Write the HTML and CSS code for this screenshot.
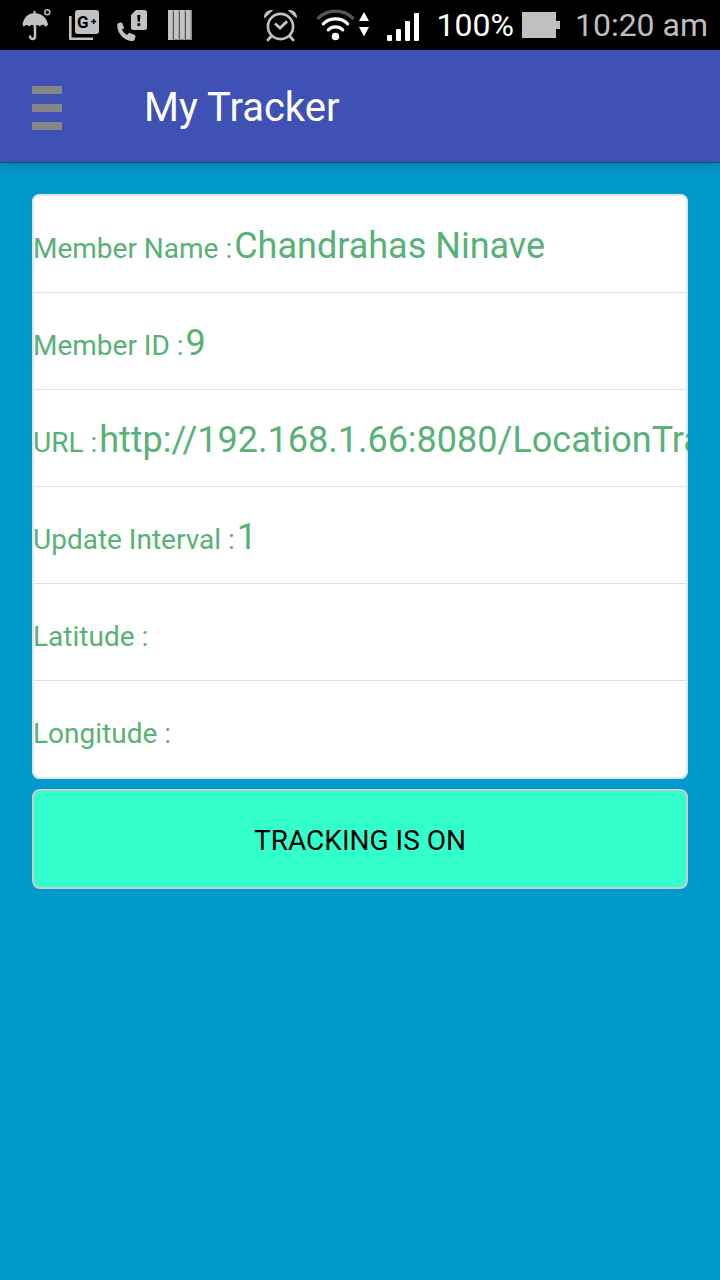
FILE: index.html
```html
<!DOCTYPE html>
<html lang="en">
<head>
<meta charset="utf-8">
<meta name="viewport" content="width=device-width, initial-scale=1">
<title>My Tracker</title>
<link rel="stylesheet" href="styles.css">
</head>
<body>
<div class="status-bar">
  <div class="status-group">
    <svg class="icon" width="48" height="50" viewBox="12 0 48 50" aria-hidden="true">
      <path fill="#c2c2c2" d="M33.5 11h2v2.200C42 13.600 47 18 48 24.500c-.4 1-1.200 1.800-2.300 2.300-1.400-2.500-4.200-2.700-5.700-.3-1-1.500-2.800-2-4.200-1.300h-2.600c-1.400-.7-3.200-.2-4.200 1.300-1.500-2.400-4-2-5 .3-.8-.5-1.300-1.500-1.400-2.500 1-6.400 5-10.700 10.900-11.100z"/>
      <path fill="none" stroke="#c2c2c2" stroke-width="2.500" stroke-linecap="round" d="M35 24v12.500c0 3.200-4.700 3.200-4.900 0"/>
      <circle cx="47.300" cy="12.300" r="2.500" fill="none" stroke="#b4b4b4" stroke-width="1.600"/>
    </svg>
    <svg class="icon" width="48" height="50" viewBox="60 0 48 50" aria-hidden="true">
      <path fill="none" stroke="#c2c2c2" stroke-width="2.600" stroke-linejoin="round" d="M70.300 16v22.700H93"/>
      <rect x="75" y="10" width="24" height="24" rx="3" fill="#c2c2c2"/>
      <text class="plus-mark" x="77" y="28">G</text>
      <path stroke="#000" stroke-width="1.600" d="M91.200 21.500h5M93.700 19v5"/>
    </svg>
    <svg class="icon" width="48" height="50" viewBox="108 0 48 50" aria-hidden="true">
      <path fill="#c2c2c2" d="M136 10h8.500a2.500 2.500 0 0 1 2.500 2.500v15a2.500 2.500 0 0 1-2.500 2.500H133.500a2.500 2.500 0 0 1-2.500-2.500V15z"/>
      <path fill="#000" d="M137.200 15h3.200l-.5 6.800h-2.200zM137.400 23.300h2.800v2.700h-2.800z"/>
      <path fill="#c2c2c2" d="M118.200 23.200l2.400-.7c.8-.2 1.400.1 1.700.8l1.500 3.700c.3.700.1 1.200-.5 1.700l-1.300 1.100c1 2 2.900 4 5.100 5.200l1.200-1.500c.5-.6 1-.7 1.700-.4l4.500 2c.9.400 1.200 1 .9 1.900l-.9 2.700c-.3.900-1 1.400-2 1.400-8 .1-15.300-7.200-15.300-16 0-1 .2-1.600 1-1.900z"/>
    </svg>
    <svg class="icon" width="48" height="50" viewBox="156 0 48 50" aria-hidden="true">
      <path fill="#8a8a8a" d="M168 10h24v30h-24z"/>
      <path fill="#c2c2c2" d="M168 10h4.500v30h-4.500zM174 10h4.500v29h-4.500zM180 10h4.500v29h-4.500zM186 10h4.500v29h-4.500z"/>
      <path stroke="#555" stroke-width="1" d="M173.500 12v27M179.500 12v27M185.500 12v27"/>
    </svg>
  </div>
  <div class="status-group">
    <svg class="icon" width="48" height="50" viewBox="257 0 48 50" aria-hidden="true">
      <g fill="none" stroke="#c2c2c2" stroke-width="2.600">
        <circle cx="280.500" cy="26.500" r="12.600"/>
        <path stroke-linecap="round" d="M271.500 36l-3.700 4M289.500 36l3.700 4"/>
        <path stroke-width="3" d="M275 23.500l5 4.500 7-6.700"/>
      </g>
      <path fill="#c2c2c2" d="M264.300 18.500c-1.300-5.500 4-9.700 8.900-8.200zM296.700 18.500c1.300-5.500-4-9.700-8.900-8.200z"/>
    </svg>
    <svg class="icon" width="72" height="50" viewBox="305 0 72 50" aria-hidden="true">
      <g fill="none" stroke-linecap="round" stroke-width="3.200">
        <path stroke="#555" d="M318.300 18c9.500-9.300 24.900-9.300 34.400 0"/>
        <path stroke="#fff" d="M323.300 23.800c6.700-6.600 17.700-6.600 24.400 0M328.300 29.800c4-3.900 10.400-3.900 14.400 0"/>
      </g>
      <circle cx="335.500" cy="36.500" r="3.800" fill="#fff"/>
      <path fill="#fff" d="M364 12l5 9h-10zM359 27h10l-5 9.500z"/>
    </svg>
    <svg class="icon" width="60" height="50" viewBox="377 0 60 50" aria-hidden="true">
      <g fill="#fff">
        <rect x="387" y="35" width="5" height="6" rx="1"/>
        <rect x="396" y="29" width="5" height="12" rx="1"/>
        <rect x="405" y="21" width="5" height="20" rx="1"/>
        <rect x="414" y="13" width="5" height="28" rx="1"/>
      </g>
    </svg>
    <span class="battery-level">100%</span>
    <svg class="icon battery" width="38" height="50" viewBox="0 0 38 50" aria-hidden="true">
      <path fill="#c0c0c0" d="M0 12h34v9h4v8h-4v9H0z"/>
    </svg>
    <span class="clock">10:20 am</span>
  </div>
</div>
<header class="toolbar">
  <button class="menu-button" type="button" aria-label="Open menu">
    <svg class="icon" width="30" height="44" viewBox="0 0 30 44" aria-hidden="true">
      <path fill="#868686" d="M0 0h30v8H0zM0 18h30v8H0zM0 36h30v8H0z"/>
    </svg>
  </button>
  <h1 class="title">My Tracker</h1>
</header>
<main class="content">
  <dl class="card">
    <div class="row"><dt>Member Name :</dt><dd>Chandrahas Ninave</dd></div>
    <div class="row"><dt>Member ID :</dt><dd>9</dd></div>
    <div class="row"><dt>URL :</dt><dd>http://192.168.1.66:8080/LocationTra</dd></div>
    <div class="row"><dt>Update Interval :</dt><dd>1</dd></div>
    <div class="row"><dt>Latitude :</dt><dd></dd></div>
    <div class="row"><dt>Longitude :</dt><dd></dd></div>
  </dl>
  <button class="tracking-button" type="button">TRACKING IS ON</button>
</main>
</body>
</html>
```
FILE: styles.css
```css
* {
  box-sizing: border-box;
}

body {
  margin: 0;
  min-height: 100vh;
  background: #0099cc;
  font-family: Roboto, "Noto Sans", sans-serif;
}

.icon {
  display: block;
  flex: none;
}

.status-bar {
  display: flex;
  justify-content: space-between;
  padding: 0 12px;
  background: #000;
  font-size: 32px;
  line-height: 50px;
  white-space: nowrap;
}

.status-group {
  display: flex;
}

.battery-level {
  color: #fff;
}

.battery {
  margin: 0 15px 0 8px;
}

.clock {
  color: #bebebe;
}

.plus-mark {
  font-size: 17px;
  font-weight: 700;
}

.toolbar {
  display: flex;
  align-items: center;
  gap: 80px;
  height: 112px;
  padding: 4px 32px 0;
  background: #3f51b5;
  box-shadow: 0 1px 0 #0b5577, 0 2px 12px rgba(0, 0, 0, 0.25);
}

.menu-button {
  padding: 0;
  border: 0;
  background: none;
}

.title {
  margin: 0;
  padding-left: 2px;
  color: #fff;
  font-size: 40px;
  font-weight: 400;
  line-height: 48px;
}

.content {
  display: flex;
  flex-direction: column;
  gap: 10px;
  padding: 32px;
}

.card {
  margin: 0;
  padding: 2px 0;
  overflow: hidden;
  border-radius: 8px;
  background: #fff;
  box-shadow: inset 0 0 0 2px #e2e4e4;
  color: #58b176;
}

.row {
  display: flex;
  align-items: baseline;
  height: 97px;
  padding-top: 28px;
  border-bottom: 1px solid #e2e4e4;
  line-height: 44px;
  white-space: nowrap;
}

.row:last-child {
  height: 96px;
  border-bottom: 0;
}

.row dt {
  padding: 0 2px 0 1px;
  font-size: 28px;
}

.row dd {
  margin: 0;
  font-size: 36px;
}

/* Keeps the label on the shared baseline while a value is empty */
.row dd::before {
  content: "\200b";
}

.tracking-button {
  height: 100px;
  padding: 2px 0 0;
  border: 2px solid #ccc;
  border-radius: 8px;
  background: #33ffcc;
  color: #000;
  font-family: inherit;
  font-size: 28px;
}
```
